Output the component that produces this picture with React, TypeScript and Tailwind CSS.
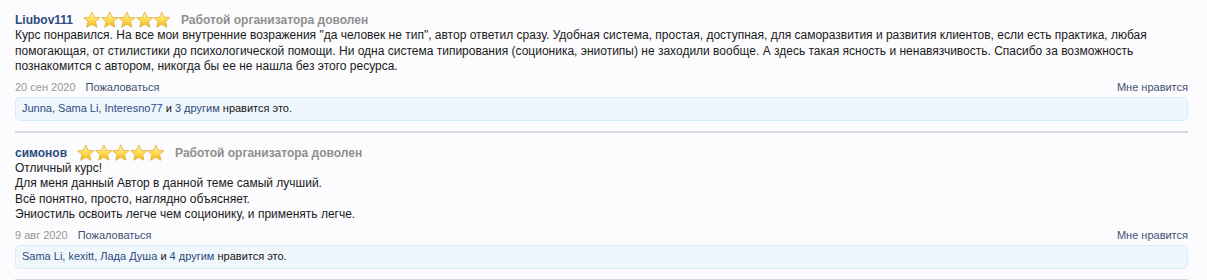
import React from "react";

type Review = {
  user: string;
  body: string[];
  date: string;
  likers: string[];
  others: number;
};

const reviews: Review[] = [
  {
    user: "Liubov111",
    body: [
      "Курс понравился. На все мои внутренние возражения \"да человек не тип\", автор ответил сразу. Удобная система, простая, доступная, для саморазвития и развития клиентов, если есть практика, любая помогающая, от стилистики до психологической помощи. Ни одна система типирования (соционика, эниотипы) не заходили вообще. А здесь такая ясность и ненавязчивость. Спасибо за возможность познакомится с автором, никогда бы ее не нашла без этого ресурса.",
    ],
    date: "20 сен 2020",
    likers: ["Junna", "Sama Li", "Interesno77"],
    others: 3,
  },
  {
    user: "симонов",
    body: [
      "Отличный курс!",
      "Для меня данный Автор в данной теме самый лучший.",
      "Всё понятно, просто, наглядно объясняет.",
      "Эниостиль освоить легче чем соционику, и применять легче.",
    ],
    date: "9 авг 2020",
    likers: ["Sama Li", "kexitt", "Лада Душа"],
    others: 4,
  },
];

function Star() {
  return (
    <svg width="17.6" height="18" viewBox="0 0 24 24">
      <defs>
        <linearGradient id="sg" x1="0" y1="0" x2="0" y2="1">
          <stop offset="0" stopColor="#fff7c0" />
          <stop offset="0.5" stopColor="#ffdc55" />
          <stop offset="1" stopColor="#f4b619" />
        </linearGradient>
      </defs>
      <path
        d="M12 1l3.2 7.3 7.9.6-6 5.2 1.9 7.8L12 17.8l-7 4.1 1.9-7.8-6-5.2 7.9-.6z"
        fill="url(#sg)"
        stroke="#dcaa2a"
        strokeWidth="1"
        strokeLinejoin="round"
      />
    </svg>
  );
}

function ReviewItem({ r }: { r: Review }) {
  return (
    <div className="pt-[12px]">
      <div className="flex items-center h-[16px]">
        <span className="text-[12px] font-bold text-[#2c4b7c]">{r.user}</span>
        <span className="flex ml-[10px]">
          {[0, 1, 2, 3, 4].map((i) => (
            <Star key={i} />
          ))}
        </span>
        <span className="ml-[10px] text-[12px] font-bold text-[#8f8f8f]">
          Работой организатора доволен
        </span>
      </div>
      <div className="text-[12px] leading-[15.5px] text-[#1a1a1a]">
        {r.body.map((line, i) => (
          <div key={i}>{line}</div>
        ))}
      </div>
      <div className="flex items-center justify-between mt-[6px] h-[14px] text-[11px]">
        <div className="flex gap-[10px]">
          <span className="text-[#969696]">{r.date}</span>
          <span className="text-[#3f4f73]">Пожаловаться</span>
        </div>
        <span className="text-[#3f4f73]">Мне нравится</span>
      </div>
      <div className="mt-[2px] h-[24px] flex items-center px-[6px] rounded-[5px] border border-[#d6ebfb] bg-[#f0f7fc] text-[11px] text-[#141414]">
        <span className="text-[#2c4b7c]">{r.likers.join(", ")}</span>
        <span>&nbsp;и&nbsp;</span>
        <span className="text-[#2c4b7c]">{r.others} другим</span>
        <span>&nbsp;нравится это.</span>
      </div>
      <div className="mt-[10px] border-b-2 border-[#d5dae0]" />
    </div>
  );
}

export default function App() {
  return (
    <div
      className="w-[1207px] h-[280px] overflow-hidden bg-[#fcfcfe] pl-[15px] pr-[19px]"
      style={{ fontFamily: '"Liberation Sans", Arial, sans-serif' }}
    >
      {reviews.map((r, i) => (
        <ReviewItem key={i} r={r} />
      ))}
    </div>
  );
}
